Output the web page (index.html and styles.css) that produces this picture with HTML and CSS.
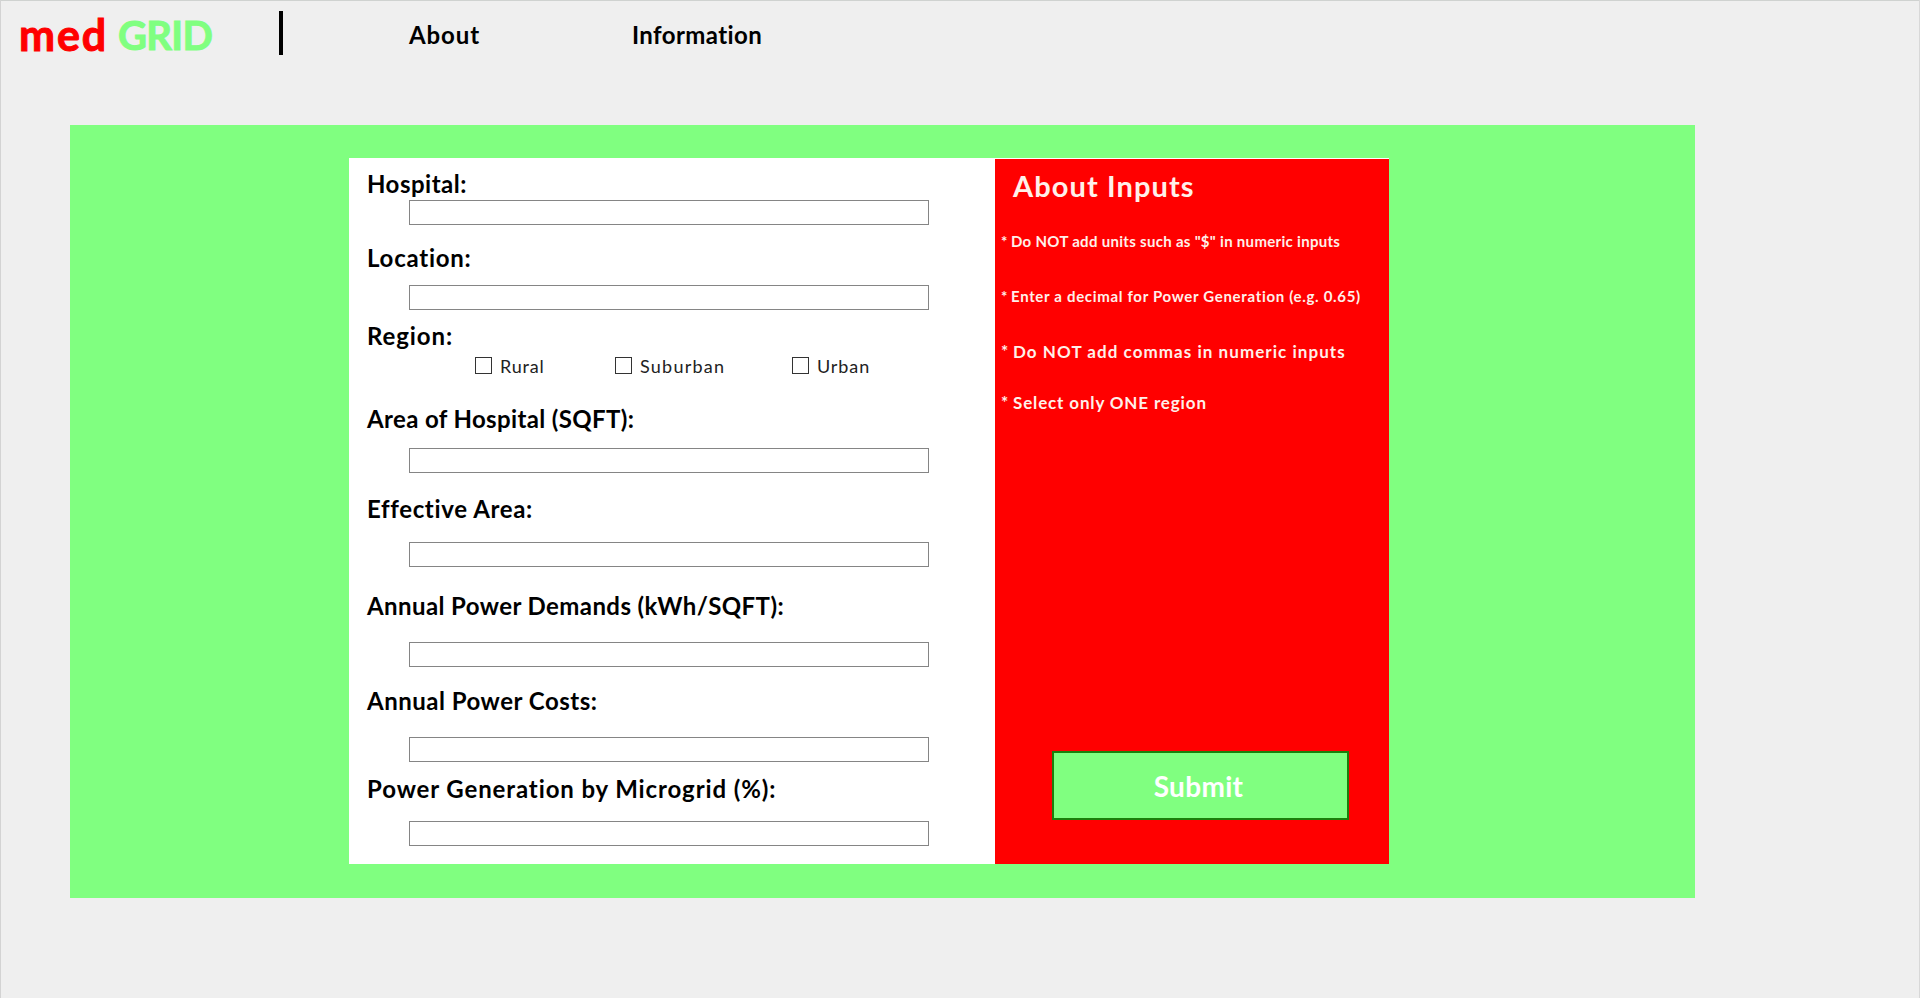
FILE: index.html
```html
<!DOCTYPE html>
<html lang="en">
<head>
<meta charset="utf-8">
<title>med GRID</title>
<link rel="stylesheet" href="styles.css">
</head>
<body>
<header class="header">
  <div class="logo"><span class="logo-med">med</span><span class="logo-grid">GRID</span></div>
  <div class="divider"></div>
  <nav class="nav">
    <a class="nav-about">About</a>
    <a class="nav-info">Information</a>
  </nav>
</header>
<main class="stage">
  <form class="form">
    <section class="fields">
      <label class="label hospital">Hospital:</label>
      <input class="field hospital-field" type="text">
      <label class="label location">Location:</label>
      <input class="field location-field" type="text">
      <label class="label region">Region:</label>
      <div class="options">
        <label class="option rural"><input class="check" type="checkbox">Rural</label>
        <label class="option suburban"><input class="check" type="checkbox">Suburban</label>
        <label class="option urban"><input class="check" type="checkbox">Urban</label>
      </div>
      <label class="label area">Area of Hospital (SQFT):</label>
      <input class="field area-field" type="text">
      <label class="label effective">Effective Area:</label>
      <input class="field effective-field" type="text">
      <label class="label demands">Annual Power Demands (kWh/SQFT):</label>
      <input class="field demands-field" type="text">
      <label class="label costs">Annual Power Costs:</label>
      <input class="field costs-field" type="text">
      <label class="label power">Power Generation by Microgrid (%):</label>
      <input class="field power-field" type="text">
    </section>
    <aside class="help">
      <h2 class="help-title">About Inputs</h2>
      <p class="note small units"><span class="star">*</span>Do NOT add units such as "$" in numeric inputs</p>
      <p class="note small decimal"><span class="star">*</span>Enter a decimal for Power Generation (e.g. 0.65)</p>
      <p class="note commas"><span class="star">*</span>Do NOT add commas in numeric inputs</p>
      <p class="note one"><span class="star">*</span>Select only ONE region</p>
      <button class="submit" type="button">Submit</button>
    </aside>
  </form>
</main>
</body>
</html>
```
FILE: styles.css
```css
* { box-sizing: border-box; }
html { height: 100%; }
body {
  margin: 0;
  height: 998px;
  padding-top: 1px;
  overflow: hidden;
  background: #efefef;
  border-left: 1px solid #d3d3d3;
  border-right: 1px solid #d8d8d8;
  font-family: Lato, "Open Sans", sans-serif;
  font-weight: 700;
  color: #000;
  box-shadow: inset 0 2px 0 -1px #cfd2d0;
}

/* Header */
.header { display: flex; align-items: flex-start; height: 124px; padding-left: 18px; }
.logo { display: flex; width: 260px; padding-top: 9px; font-size: 40px; line-height: 50px; }
.logo-med { width: 99px; font-size: 43px; letter-spacing: 1.9px; color: #f00; -webkit-text-stroke: 1px #f00; }
.logo-grid { letter-spacing: -0.7px; color: #80ff80; -webkit-text-stroke: 1px #80ff80; }
.divider { width: 4px; height: 44px; margin-top: 10px; background: #000; }
.nav { display: flex; padding: 19px 0 0 126px; font-size: 24px; line-height: 30px; }
.nav-about { width: 223px; letter-spacing: 0.9px; }
.nav-info { letter-spacing: 0.4px; }

/* Form */
.stage { width: 1625px; height: 773px; margin-left: 69px; padding: 33px 0 0 279px; background: #80ff80; }
.form { display: flex; width: 1040px; height: 706px; background: #fff; }
.fields { display: flex; flex-direction: column; width: 646px; padding: 11px 0 0 18px; }
.label { height: 30px; font-size: 24px; line-height: 30px; white-space: nowrap; }
.field {
  width: 520px;
  height: 25px;
  margin: 0 0 0 42px;
  padding: 0 4px;
  border: 1px solid #858585;
  border-radius: 0;
  background: #fff;
}
.hospital { letter-spacing: 0.5px; }
.hospital-field { margin-top: 1px; }
.location { margin-top: 18px; letter-spacing: 0.75px; }
.location-field { margin-top: 12px; }
.region { margin-top: 11px; letter-spacing: 0.9px; }
.area { margin-top: 30px; letter-spacing: 0.36px; }
.area-field { margin-top: 14px; }
.effective { margin-top: 21px; letter-spacing: 0.65px; }
.effective-field { margin-top: 18px; }
.demands { margin-top: 24px; letter-spacing: 0.41px; }
.demands-field { margin-top: 21px; }
.costs { margin-top: 19px; letter-spacing: 0.5px; }
.costs-field { margin-top: 21px; }
.power { margin-top: 12px; letter-spacing: 0.88px; }
.power-field { margin-top: 17px; }

.options { display: flex; height: 17px; margin: 6px 0 0 108px; font-size: 18px; font-weight: 400; line-height: 18px; }
.option { display: flex; gap: 8px; color: #222; }
.check { appearance: none; width: 17px; height: 17px; margin: 0; border: 1px solid #333; background: #fff; }
.rural { width: 140px; letter-spacing: 0.8px; }
.suburban { width: 177px; letter-spacing: 1.25px; }
.urban { letter-spacing: 0.9px; }

/* Help panel */
.help { display: flex; flex-direction: column; width: 394px; height: 705px; margin-top: 1px; padding: 10px 0 0 6px; background: #f00; color: #fff0ea; }
.help-title { margin: 0 0 0 12px; font-size: 29px; font-weight: 700; line-height: 34px; letter-spacing: 1.1px; }
.note { display: flex; height: 20px; margin: 0; font-size: 17px; line-height: 20px; white-space: nowrap; }
.small { font-size: 15px; }
.star { width: 12px; }
.small .star { width: 10px; }
.units { margin-top: 28px; letter-spacing: 0.3px; }
.decimal { margin-top: 35px; letter-spacing: 0.68px; }
.commas { margin-top: 36px; letter-spacing: 1.05px; }
.one { margin-top: 31px; letter-spacing: 0.85px; }
.submit {
  width: 297px;
  height: 69px;
  margin: 338px 0 0 51px;
  padding: 0 4px 0 0;
  border: 2px solid #1b7f0b;
  background: #80ff80;
  color: #fff;
  font: 700 28px/40px Lato, "Open Sans", sans-serif;
  letter-spacing: 0.3px;
}
```
